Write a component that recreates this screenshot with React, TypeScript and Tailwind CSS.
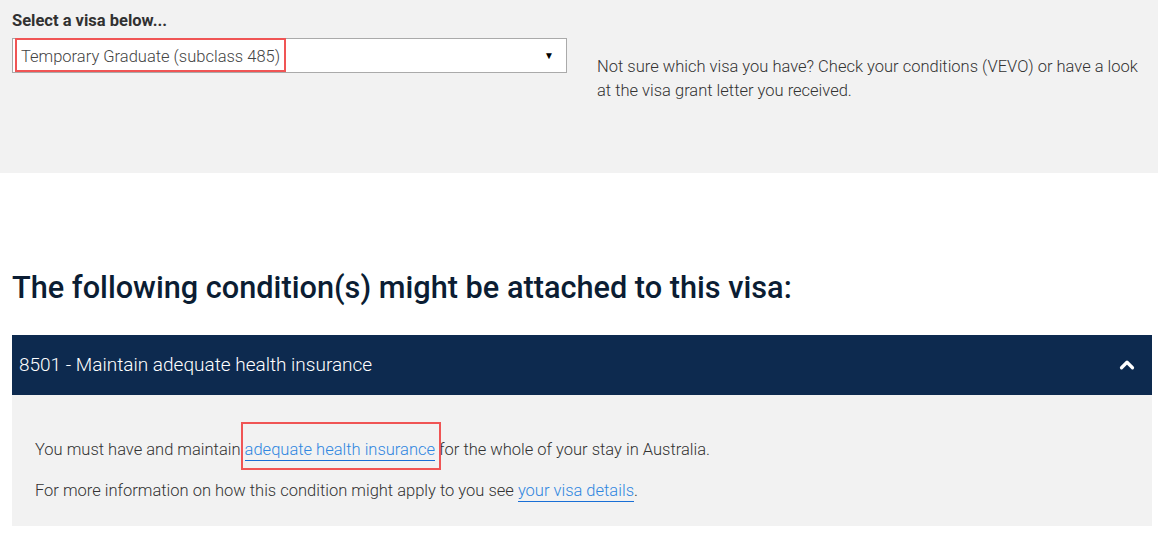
import { ChevronUp } from 'lucide-react';

const App = () => {
  return (
    <div className="min-h-screen bg-white font-['Roboto',sans-serif] text-[#333]">
      {/* Visa selector */}
      <section className="bg-[#f2f2f2] h-[173px] pl-3 pr-[4px] pt-[9px]">
        <label className="block text-[16.5px] font-bold text-[#313131] leading-[24px]">
          Select a visa below...
        </label>
        <div className="flex mt-[5px]">
          <div className="relative w-[555px] h-[35px] shrink-0 bg-white border border-[#aaa] flex items-center pl-[8px] pr-3">
            <span className="text-[16.5px] font-light text-[#444] leading-none mt-[3px]">
              Temporary Graduate (subclass 485)
            </span>
            <span className="ml-auto text-[10px] text-black">▼</span>
            <div className="absolute left-[2px] top-[-1px] w-[271px] h-[34px] border-2 border-[#f05555]" />
          </div>
          <p className="ml-[30px] mt-[17px] text-[16.5px] font-light leading-[24px] text-[#333]">
            Not sure which visa you have? Check your conditions (VEVO) or have a look at the visa grant letter you received.
          </p>
        </div>
      </section>

      {/* Conditions */}
      <section className="px-3 pt-[95px]">
        <h2 className="text-[30.7px] font-medium leading-[40px] text-[#0b1d33] mb-[27px]">
          The following condition(s) might be attached to this visa:
        </h2>
        <div className="w-[1140px]">
          <div className="h-[60px] bg-[#0d2a4f] flex items-center pl-[7px] pr-[14px]">
            <span className="text-[19px] font-light text-white">8501 - Maintain adequate health insurance</span>
            <ChevronUp className="ml-auto w-[22px] h-[22px] text-white" strokeWidth={3.5} />
          </div>
          <div className="bg-[#f2f2f2] h-[131px] pl-[23px] pt-[43px] text-[16.5px] font-light text-[#333]">
            <p className="leading-[24px]">
              You must have and maintain{' '}
              <span className="relative inline-block">
                <a href="#" className="text-[#2f86e0] border-b border-[#1a6fd6] pb-[1px]">adequate health insurance</a>
                <span className="absolute left-[-4px] top-[-16px] w-[200px] h-[48px] border-2 border-[#f05555]" />
              </span>{' '}
              for the whole of your stay in Australia.
            </p>
            <p className="leading-[24px] mt-[17px]">
              For more information on how this condition might apply to you see{' '}
              <a href="#" className="text-[#2f86e0] border-b border-[#1a6fd6] pb-[1px]">your visa details</a>.
            </p>
          </div>
        </div>
      </section>
    </div>
  );
};

export default App;
